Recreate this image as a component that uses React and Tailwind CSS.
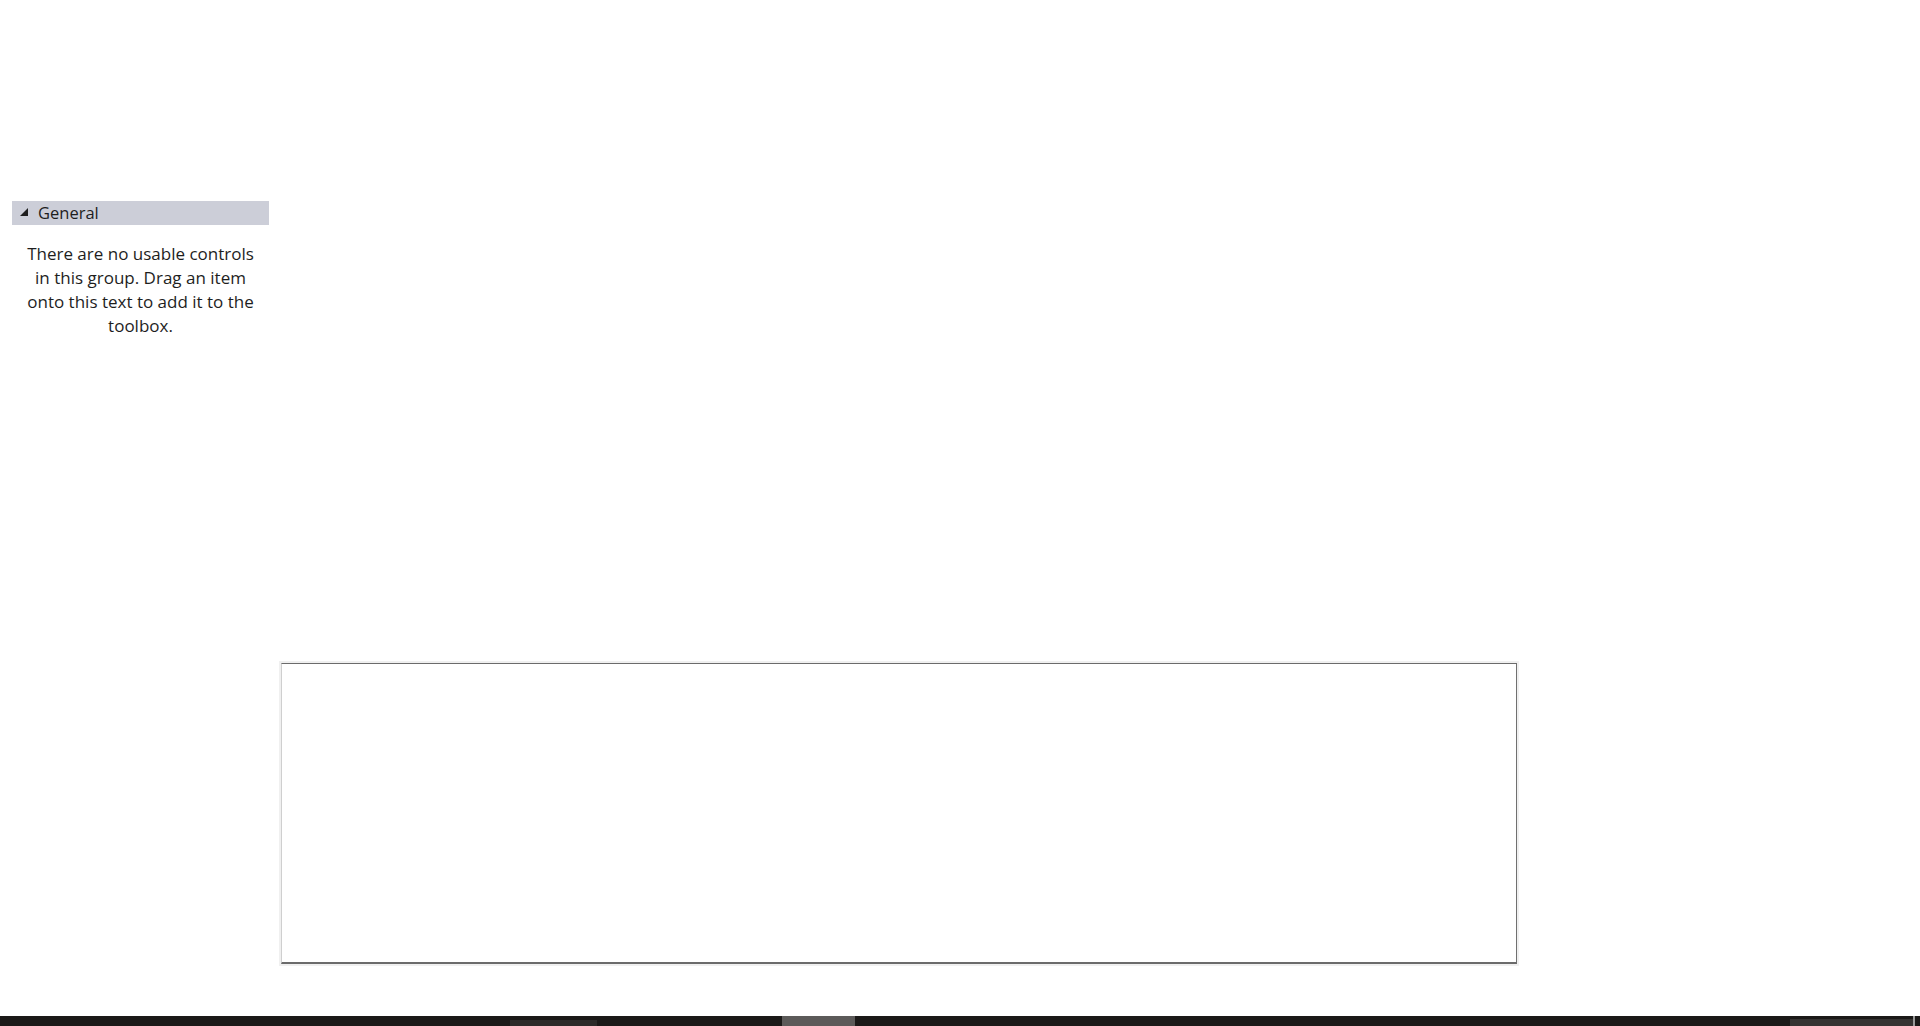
import React from "react"

// Toolbox panel with an empty "General" group and a blank designer surface
export default function App() {
  return (
    <div
      className="flex flex-col h-[1026px] w-full bg-white text-[#1e1e1e] overflow-hidden"
      style={{ fontFamily: '"Open Sans", "Noto Sans", sans-serif' }}
    >
      {/* toolbox area */}
      <div className="h-[663px] pt-[201px] pl-3">
        <div className="w-[257px]">
          <div className="flex items-center h-6 bg-[#ccced8] pl-[7px] gap-[9px]">
            <svg width="10" height="10" viewBox="0 0 10 10" className="mt-[-2px]">
              <path d="M9 1 L9 9 L1 9 Z" fill="#1e1e1e" />
            </svg>
            <span className="text-[16.5px] leading-6">General</span>
          </div>
          <p className="mt-[17px] px-3 text-center text-[17px] leading-6">
            There are no usable controls in this group. Drag an item onto this text to add it to the toolbox.
          </p>
        </div>
      </div>

      {/* design surface */}
      <div className="ml-[281px] w-[1236px] h-[301px] bg-white border-t border-t-[#6b6b6b] border-l border-l-[#cfcfcf] border-r border-r-[#707070] border-b-2 border-b-[#6b6b6b] outline outline-2 outline-offset-0 outline-[#f0f0f0]" />

      <div className="flex-1" />

      {/* bottom strip */}
      <div className="h-[10px] bg-[#1b1918] flex">
        <div className="w-[510px]" />
        <div className="w-[87px] mt-[4px] h-[6px] bg-[#2c2a29]" />
        <div className="w-[185px]" />
        <div className="w-[73px] bg-[#5c5a59]" />
        <div className="flex-1" />
        <div className="w-[123px] mt-[3px] h-[7px] bg-[#353332]" />
        <div className="w-[2px] bg-[#9a9a9a]" />
        <div className="w-[5px]" />
      </div>
    </div>
  )
}
